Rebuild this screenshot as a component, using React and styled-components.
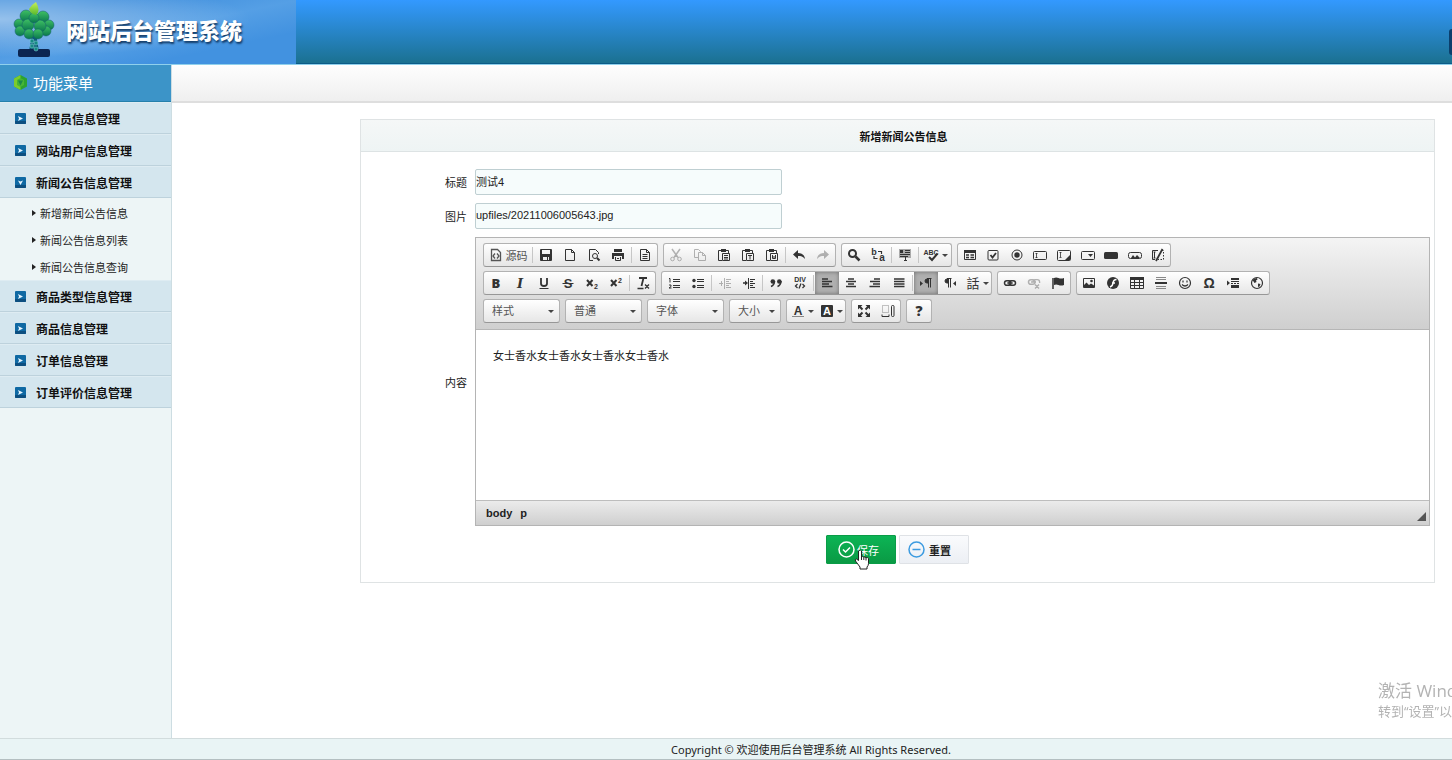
import React, { useState } from 'react'
import styled, { createGlobalStyle, css } from 'styled-components'

const GlobalStyle = createGlobalStyle`
  * {
    box-sizing: border-box;
  }
  body {
    margin: 0;
    background: white;
    color: #222;
    font-family: "Liberation Sans", "Noto Sans CJK SC", sans-serif;
    font-size: 11px;
  }
  button, input, select, textarea {
    font: inherit;
    color: inherit;
  }
`

const Page = styled.div`
  min-height: 100vh;
  display: flex;
  flex-direction: column;
`

const Banner = styled.header`
  height: 65px;
  display: flex;
  justify-content: space-between;
  background: linear-gradient(#3399ff, #2b8bd8 35%, #1b7191 98%);
  border-bottom: 1px solid #8fd0ec;
  box-shadow: inset 0 -1px 0 #0c5c88;
`

const Brand = styled.div`
  width: 296px;
  display: flex;
  align-items: center;
  gap: 10px;
  padding: 0 0 6px 12px;
  background: radial-gradient(
      ellipse at 0 30%,
      rgba(255, 255, 255, 0.45),
      rgba(255, 255, 255, 0) 60%
    ),
    linear-gradient(168deg, #3f8edc 20%, #559fe5 50%, #4292e0 75%);
`

const BrandName = styled.h1`
  margin: 0;
  color: white;
  font-family: "Noto Sans CJK SC", sans-serif;
  font-size: 22px;
  font-weight: 900;
  line-height: 58px;
  text-shadow: 1px 2px 2px #123a66;
`

const BannerTab = styled.span`
  width: 3px;
  height: 26px;
  margin-top: 29px;
  background: #0b3f6c;
  border-radius: 3px 0 0 3px;
`

const Body = styled.div`
  flex: 1;
  display: flex;
`

const Sidebar = styled.nav`
  width: 172px;
  flex-shrink: 0;
  background: #edf5f6;
  border-right: 1px solid #cddde2;
`

const SidebarTitle = styled.h2`
  height: 37px;
  margin: 0;
  display: flex;
  align-items: center;
  gap: 5px;
  padding: 0 0 2px 13px;
  background: #3c94c8;
  border-bottom: 1px solid #2580ab;
  color: white;
  font-size: 15px;
  font-weight: 400;
`

const MenuButton = styled.button`
  width: 100%;
  height: 32px;
  display: flex;
  align-items: center;
  gap: 10px;
  padding: 0 0 0 15px;
  background: #d4e6ee;
  border: none;
  border-bottom: 1px solid #bdd2dc;
  border-top: 1px solid #deecf2;
  color: #111;
  font-size: 12px;
  font-weight: 700;
  cursor: pointer;
`

const SubMenu = styled.ul`
  margin: 0;
  padding: 1px 0 0;
  list-style: none;
`

const SubLink = styled.a`
  height: 27px;
  display: flex;
  align-items: center;
  gap: 4px;
  padding-left: 32px;
  color: #222;
  text-decoration: none;

  &::before {
    content: "";
    border-left: 4px solid #222;
    border-top: 3px solid transparent;
    border-bottom: 3px solid transparent;
  }
`

const Main = styled.main`
  flex: 1;
  min-width: 0;
`

const TopStrip = styled.div`
  height: 38px;
  background: linear-gradient(#fefefe, #efefef);
  border-bottom: 2px solid #dedede;
`

const Card = styled.form`
  margin: 16px 17px 0 188px;
  border: 1px solid #dfe3e4;
`

const CardTitle = styled.h3`
  height: 32px;
  margin: 0;
  padding-left: 12px;
  background: linear-gradient(#f5f7f7, #eef4f4);
  border-bottom: 1px solid #dde3e4;
  color: #111;
  font-size: 11px;
  line-height: 34px;
  text-align: center;
`

const Fields = styled.div`
  display: grid;
  grid-template-columns: 106px 1fr;
  align-items: center;
  gap: 8px;
  padding: 17px 4px 0 0;
`

const Label = styled.label`
  text-align: right;
`

const TextInput = styled.input`
  width: 307px;
  height: 26px;
  padding: 0 0 2px;
  background: #f6fcfc;
  border: 1px solid #bfcfd2;
  border-radius: 2px;
`

const Editor = styled.div`
  min-width: 0;
  border: 1px solid #b4b4b4;
`

const Toolbar = styled.div`
  display: flex;
  flex-direction: column;
  gap: 4px;
  padding: 5px 7px 6px;
  background: linear-gradient(#f4f4f4, #cfcfcf);
  border-bottom: 1px solid #b6b6b6;
`

const ToolRow = styled.div`
  display: flex;
  gap: 5px;
`

const groupBox = css`
  height: 24px;
  background: linear-gradient(#ffffff, #e6e6e6);
  border: 1px solid #b2b2b2;
  border-bottom-color: #979797;
  border-radius: 3px;
`

const ToolGroup = styled.div`
  ${groupBox}
  width: ${p => (p.$width ? `${p.$width}px` : 'auto')};
  display: flex;
  align-items: center;
`

const ToolButton = styled.button`
  width: ${p => p.$width || 24}px;
  height: 22px;
  display: flex;
  align-items: center;
  justify-content: center;
  gap: 2px;
  padding: 0;
  border: none;
  background: ${p => (p.$active ? '#b0b0b0' : 'none')};
  box-shadow: ${p => (p.$active ? 'inset 0 0 4px #6f6f6f' : 'none')};
  color: ${p => (p.$source ? '#555' : '#333')};
  opacity: ${p => (p.disabled ? 0.35 : 1)};
  white-space: nowrap;
  cursor: default;

  svg {
    flex-shrink: 0;
    overflow: visible;
  }
`

const Separator = styled.span`
  width: 1px;
  height: 16px;
  margin: 0 1px;
  background: #c6c6c6;
`

const Caret = styled.span`
  border-top: 3px solid #444;
  border-left: 3px solid transparent;
  border-right: 3px solid transparent;
`

const Combo = styled.span`
  ${groupBox}
  position: relative;
  width: ${p => p.$width}px;

  &::after {
    content: "";
    position: absolute;
    right: 5px;
    top: 10px;
    border-top: 3px solid #444;
    border-left: 3px solid transparent;
    border-right: 3px solid transparent;
    pointer-events: none;
  }
`

const ComboSelect = styled.select`
  appearance: none;
  width: 100%;
  height: 22px;
  padding: 0 12px 0 8px;
  background: none;
  border: none;
  color: #555;
`

const EditArea = styled.textarea`
  display: block;
  width: 100%;
  height: 170px;
  padding: 17px;
  border: none;
  outline: none;
  resize: none;
  line-height: 18px;
`

const StatusBar = styled.div`
  height: 25px;
  display: flex;
  align-items: center;
  gap: 8px;
  padding: 0 3px 0 10px;
  background: linear-gradient(#ebebeb, #cfcfcf);
  border-top: 1px solid #bdbdbd;
  color: #222;
  font-weight: 700;
`

const ResizeGrip = styled.span`
  margin: 6px 0 0 auto;
  border-left: 9px solid transparent;
  border-bottom: 9px solid #555;
`

const Actions = styled.div`
  display: flex;
  justify-content: center;
  gap: 3px;
  padding: 9px 0 18px;
`

const ActionButton = styled.button`
  position: relative;
  width: 70px;
  height: 29px;
  display: flex;
  align-items: center;
  gap: ${p => (p.$primary ? 2 : 4)}px;
  padding: 0 0 0 ${p => (p.$primary ? 11 : 8)}px;
  background: ${p =>
    p.$primary
      ? 'linear-gradient(#0cb455, #0a9a44)'
      : 'linear-gradient(#fafbfd, #eceff4)'};
  border: 1px solid ${p => (p.$primary ? '#0a9c47' : '#dfe2e6')};
  border-radius: 1px;
  color: ${p => (p.$primary ? 'white' : '#222')};
  font-weight: ${p => (p.$primary ? 400 : 700)};
  cursor: pointer;
`

const Pointer = styled.svg`
  position: absolute;
  left: 27px;
  top: 13px;
`

const Footer = styled.footer`
  height: 22px;
  padding-left: 170px;
  background: #e9f4f5;
  border-top: 1px solid #d2dcdd;
  border-bottom: 1px solid #b4bfc1;
  font-family: "Noto Sans", "Noto Sans CJK SC", sans-serif;
  line-height: 21px;
  text-align: center;
`

const Watermark = styled.div`
  position: fixed;
  right: 0;
  bottom: 40px;
  width: 74px;
  overflow: hidden;
  white-space: nowrap;
  color: #b3b3b3;
  font-family: "Open Sans", "Noto Sans CJK SC", sans-serif;
  font-size: 13px;
  line-height: 18px;

  strong {
    display: block;
    font-size: 17px;
    font-weight: 400;
    line-height: 22px;
  }
`

const doc = <path d="M3.500 2.500h6l3 3v8h-9zM9.500 2.500v3h3" />
const clipboard = (
  <>
    <path d="M6 13.500H2.500v-10H12.500V6" />
    <path d="M5 2h5v3H5z" fill="currentColor" stroke="none" />
    <path d="M6.500 6.500h7v7h-7z" />
  </>
)
const glyph = {
  fill: 'currentColor',
  stroke: 'none',
  textAnchor: 'middle',
  fontFamily: 'Liberation Sans',
  fontWeight: 700
}

const icons = {
  source: (
    <>
      <path d="M3.500 13.500v-11h6l3 3v8z" strokeWidth="1.300" />
      <path d="M7 6.500L5 9l2 2.500M9 6.500L11 9l-2 2.500" strokeWidth="1.300" />
    </>
  ),
  save: (
    <>
      <path
        d="M2 3q0-1 1-1h10q1 0 1 1v10q0 1-1 1H3q-1 0-1-1zM4 3v4h8V3zM5 10v3h6v-3z"
        fill="currentColor"
        fillRule="evenodd"
        stroke="none"
      />
      <path d="M9.500 10v3" />
    </>
  ),
  page: doc,
  preview: (
    <>
      <path d="M12.500 7V5.500l-3-3h-6v11H7" />
      <circle cx="9" cy="9" r="2.500" />
      <path d="M11 11l2.500 2.500" strokeWidth="2" />
    </>
  ),
  print: (
    <>
      <path d="M4 2h8v3H4zM2 6h12v6h-2V9H4v3H2z" fill="currentColor" stroke="none" />
      <path d="M5.500 10v3.500h5V10M7 11.500h2" />
    </>
  ),
  template: (
    <>
      {doc}
      <path d="M5.500 7.500h5M5.500 9.500h5M5.500 11.500h5" />
    </>
  ),
  cut: (
    <>
      <path d="M4 2l6 8.500M12 2L6 10.500" strokeWidth="1.500" />
      <circle cx="4.500" cy="12" r="1.800" />
      <circle cx="11.500" cy="12" r="1.800" />
    </>
  ),
  copy: (
    <>
      <path d="M6 10.500H2.500v-8h4l2 2V6" />
      <path d="M6.500 5.500h4l3 3v5h-7zM10.500 5.500v3h3" />
    </>
  ),
  paste: (
    <>
      {clipboard}
      <path d="M8 8.500h4M8 10.500h4M8 12h4" />
    </>
  ),
  pasteText: (
    <>
      {clipboard}
      <path d="M8 8.500h4M10 8.500v4" />
    </>
  ),
  pasteWord: (
    <>
      {clipboard}
      <path d="M8.500 8v3.500h3V8M10 9v3" />
    </>
  ),
  undo: (
    <path
      d="M2 7.500L7 3v3c4 0 6.500 2 7 6-2-2.500-4-3-7-3v3z"
      fill="currentColor"
      stroke="none"
    />
  ),
  redo: (
    <path
      d="M14 7.500L9 3v3c-4 0-6.500 2-7 6 2-2.500 4-3 7-3v3z"
      fill="currentColor"
      stroke="none"
    />
  ),
  find: (
    <>
      <circle cx="6.500" cy="6.500" r="3.500" strokeWidth="2" />
      <path d="M9.500 9.500l4 4" strokeWidth="2.500" />
    </>
  ),
  replace: (
    <>
      <text x="4" y="8" fontSize="9" {...glyph}>b</text>
      <text x="12" y="14" fontSize="10" {...glyph}>a</text>
      <path d="M8 4.500h3.500V7M7.500 11.500H4V9" strokeWidth="1.200" />
    </>
  ),
  selectAll: (
    <>
      <path d="M2 2h12v9H2z" fill="#aaa" stroke="none" />
      <path d="M8 3.500h5M8 5.500h5M3 7.500h10M3 9.500h8M8.500 10v4M7 13.500h3" />
      <path d="M3 3h3v3H3z" fill="currentColor" stroke="none" />
    </>
  ),
  spell: (
    <>
      <text x="7" y="7.500" fontSize="7" {...glyph}>ABC</text>
      <path d="M5 10l3 3 5.500-6.500" strokeWidth="2" />
    </>
  ),
  form: (
    <>
      <path d="M2.500 4h11v8.500h-11z" />
      <path d="M2 3h12v3H2z" fill="currentColor" stroke="none" />
      <path d="M4 8h3M4 10.500h3M8.500 8H12M8.500 10.500H12" strokeWidth="1.500" />
    </>
  ),
  checkbox: (
    <>
      <rect x="3" y="3.500" width="10" height="9.500" rx="1" />
      <path d="M5.500 8l2 2.500 3.500-4.500" strokeWidth="1.800" />
    </>
  ),
  radio: (
    <>
      <circle cx="8" cy="8" r="5" />
      <circle cx="8" cy="8" r="2.700" fill="currentColor" stroke="none" />
    </>
  ),
  textField: (
    <>
      <rect x="1.500" y="4.500" width="13" height="8" rx="1" />
      <path d="M4.500 6v5M3.500 6.500h2M3.500 10.500h2" strokeWidth=".8" />
    </>
  ),
  textarea: (
    <>
      <rect x="1.500" y="3.500" width="13" height="10" rx="1" />
      <path d="M4.500 5v5M3.500 5.500h2M3.500 10.500h2" strokeWidth=".8" />
      <path d="M14 8v5H9z" fill="currentColor" stroke="none" />
    </>
  ),
  selectField: (
    <>
      <rect x="1.500" y="4.500" width="13" height="8" rx="1" />
      <path d="M8 7h5l-2.500 3z" fill="currentColor" stroke="none" />
    </>
  ),
  buttonField: (
    <rect x="1" y="5" width="14" height="7" rx="1.500" fill="currentColor" stroke="none" />
  ),
  imageButton: (
    <>
      <rect x="1.500" y="5.500" width="13" height="6" rx="2" />
      <path d="M4 11l2-3 2 2.500L10 8l3 3z" fill="currentColor" stroke="none" />
    </>
  ),
  hidden: (
    <>
      <path d="M8 3.500H2.500v9H5M4.500 5v6M3.500 5h2M3.500 11h2" />
      <path d="M12 3.500h1.500v9H8" strokeDasharray="1.500 1.500" />
      <path d="M12.500 2L6 14" strokeWidth="1.800" />
    </>
  ),
  bold: <text x="8" y="12.500" fontSize="13" {...glyph} fontFamily="Open Sans" fontWeight="800">B</text>,
  italic: (
    <text x="8" y="12.500" fontSize="13" {...glyph} fontFamily="DejaVu Serif" fontStyle="italic">
      I
    </text>
  ),
  underline: (
    <>
      <path d="M5 3v5.500q0 2.500 3 2.500t3-2.500V3" strokeWidth="1.800" />
      <path d="M3.500 13.500h9" />
    </>
  ),
  strike: (
    <>
      <text x="8" y="12.500" fontSize="13" {...glyph}>S</text>
      <path d="M2.500 8.500h11" />
    </>
  ),
  subscript: (
    <>
      <path d="M3 5l5.500 6M8.500 5L3 11" strokeWidth="2" />
      <text x="12" y="14" fontSize="7" {...glyph}>2</text>
    </>
  ),
  superscript: (
    <>
      <path d="M3 5l5.500 6M8.500 5L3 11" strokeWidth="2" />
      <text x="12" y="8" fontSize="7" {...glyph}>2</text>
    </>
  ),
  removeFormat: (
    <>
      <path d="M4 3h8M8.500 3l-2 8" strokeWidth="1.800" />
      <path d="M2.500 13.500h6M10 9.500l4 4M14 9.500l-4 4" strokeWidth="1.300" />
    </>
  ),
  numbered: (
    <>
      <path d="M7 4.500h7M7 6.500h7M7 10.500h7M7 12.500h7" />
      <path d="M3 3.500h1v4M3 10h2v1.500L3 13h2.500" />
    </>
  ),
  bulleted: (
    <>
      <path d="M7 4.500h7M7 6.500h7M7 10.500h7M7 12.500h7" />
      <circle cx="4" cy="5.500" r="1.700" fill="currentColor" stroke="none" />
      <circle cx="4" cy="11.500" r="1.700" fill="currentColor" stroke="none" />
    </>
  ),
  outdent: (
    <>
      <path d="M7.500 3v11M9 4.500h5M9 6.500h3M9 8.500h5M9 10.500h3M9 12.500h5" />
      <path d="M2 8.500h4M4.500 6v5" />
    </>
  ),
  indent: (
    <>
      <path d="M7.500 3v11M9 4.500h5M9 6.500h3M9 8.500h5M9 10.500h3M9 12.500h5" />
      <path d="M2 8h4" strokeWidth="1.500" />
      <path d="M4 5.500L7 8l-3 2.500z" fill="currentColor" stroke="none" />
    </>
  ),
  quote: (
    <>
      <circle cx="4.800" cy="6.500" r="2.300" fill="currentColor" stroke="none" />
      <circle cx="11.300" cy="6.500" r="2.300" fill="currentColor" stroke="none" />
      <path d="M6.500 6q0 4-3.500 5.500M13 6q0 4-3.500 5.500" strokeWidth="1.500" />
    </>
  ),
  div: (
    <>
      <text x="8" y="7" fontSize="7" {...glyph}>DIV</text>
      <path d="M5.500 9L3.500 11l2 2M10.500 9l2 2-2 2M9 8.500l-2 5" strokeWidth="1.300" />
    </>
  ),
  left: <path d="M3 4h6M3 6.500h10M3 9h7M3 11.500h10.500" strokeWidth="1.700" />,
  center: <path d="M5 4h6M3 6.500h10M5 9h6M3 11.500h10" strokeWidth="1.700" />,
  right: <path d="M7 4h6M3 6.500h10M6 9h7M2.500 11.500H13" strokeWidth="1.700" />,
  justify: <path d="M3 4h10.500M3 6.500h10.500M3 9h10.500M3 11.500h10.500" strokeWidth="1.700" />,
  ltr: (
    <>
      <path d="M2 6l3 2.500L2 11z" fill="currentColor" stroke="none" />
      <path d="M10 4H9a2 2 0 000 4h1z" fill="currentColor" />
      <path d="M10.500 3.500v9M12.500 3.500v9M9 3.500h4.500" />
    </>
  ),
  rtl: (
    <>
      <path d="M14 6l-3 2.500 3 2.500z" fill="currentColor" stroke="none" />
      <path d="M6 4H5a2 2 0 000 4h1z" fill="currentColor" />
      <path d="M6.500 3.500v9M8.500 3.500v9M5 3.500h4.500" />
    </>
  ),
  language: (
    <text x="8" y="13" fontSize="13" {...glyph} fontFamily="Noto Sans CJK TC" fontWeight="400">
      話
    </text>
  ),
  link: (
    <>
      <rect x="2.500" y="5.700" width="6.500" height="4.600" rx="2.300" strokeWidth="1.500" />
      <rect x="7" y="5.700" width="6.500" height="4.600" rx="2.300" strokeWidth="1.500" />
      <path d="M5 8h6" />
    </>
  ),
  unlink: (
    <>
      <rect x="2.500" y="4.700" width="6.500" height="4.600" rx="2.300" strokeWidth="1.500" />
      <path
        d="M7 7q0-2.300 2.300-2.300h2q2.300 0 2.300 2.300v1M5 7h5M9 9.500l4 4M13 9.500l-4 4"
        strokeWidth="1.300"
      />
    </>
  ),
  flag: (
    <>
      <path d="M3 3v11" strokeWidth="1.500" />
      <path d="M4 3q2-1 4.500 0T14 3v7q-3 1-5.500 0T4 10z" fill="currentColor" stroke="none" />
    </>
  ),
  image: (
    <>
      <path d="M2.500 3.500h11v9h-11z" />
      <path d="M3 12v-2l2.500-2.500L8 10l2-1.500 3 2V12z" fill="currentColor" stroke="none" />
      <circle cx="10.500" cy="6" r="1.300" fill="currentColor" stroke="none" />
    </>
  ),
  flash: (
    <>
      <circle cx="8" cy="8" r="6" fill="currentColor" stroke="none" />
      <path d="M11.500 4.500q-3 0-3.500 3.500t-3 4M7 8h3" stroke="white" strokeWidth="1.500" />
    </>
  ),
  table: (
    <>
      <path d="M1.500 3.500h13v10h-13zM1.500 7.500h13M1.500 10.500h13M5.500 4v9M10.500 4v9" />
      <path d="M1 2h14v3H1z" fill="currentColor" stroke="none" />
    </>
  ),
  rule: (
    <>
      <path d="M3 2.500h10M3 4.500h10M3 11.500h10M3 13.500h10" stroke="#888" />
      <path d="M2 8h12" strokeWidth="2" />
    </>
  ),
  smiley: (
    <>
      <circle cx="8" cy="8" r="5.500" strokeWidth="1.200" />
      <path d="M6 5.500v2M10 5.500v2M5 9.500q3 3 6 0" strokeWidth="1.200" />
    </>
  ),
  omega: <text x="8" y="13" fontSize="14" {...glyph}>Ω</text>,
  pageBreak: (
    <>
      <path d="M6 4h8M6 12h8" strokeWidth="2" />
      <path d="M6 6.500h8M6 10.500h8" />
      <path d="M6 8.500h8" strokeDasharray="2 1" />
      <path d="M2 5.500l3 2.500-3 2.500z" fill="currentColor" stroke="none" />
    </>
  ),
  globe: (
    <>
      <circle cx="8" cy="8" r="5.500" strokeWidth="1.200" />
      <path
        d="M3.500 5q2-2 4.500-2l.5 1.500-1.500 1 .5 1.500-2 1zM9 8.500l2.500.5-1 2.500-1.500.5z"
        fill="currentColor"
        stroke="none"
      />
    </>
  ),
  textColor: (
    <>
      <text x="8" y="11.500" fontSize="12" {...glyph}>A</text>
      <path d="M2 13.500h12" stroke="#888" />
    </>
  ),
  bgColor: (
    <>
      <rect x="2" y="2" width="12" height="12" rx="1" fill="currentColor" stroke="none" />
      <text x="8" y="12" fontSize="11" {...glyph} fill="white">A</text>
    </>
  ),
  maximize: (
    <>
      <path
        d="M2 2h4.500L2 6.500zM14 2H9.500L14 6.500zM2 14h4.500L2 9.500zM14 14H9.500L14 9.500z"
        fill="currentColor"
        stroke="none"
      />
      <path
        d="M3 3l3.500 3.500M13 3L9.500 6.500M3 13l3.500-3.500M13 13L9.500 9.500"
        strokeWidth="2"
      />
    </>
  ),
  blocks: (
    <>
      <path d="M2.500 2.500h6v7h-6z" strokeDasharray="1 1" stroke="#888" />
      <rect x="11.500" y="2.500" width="2.500" height="11" rx="1" />
      <path d="M2 11.500v2h7v-2" />
    </>
  ),
  help: <text x="8" y="13" fontSize="14" {...glyph} fontFamily="Open Sans" fontWeight="800">?</text>
}

const Icon = ({ name }) => (
  <svg width="16" height="16" viewBox="0 0 16 16" fill="none" stroke="currentColor" aria-hidden="true">
    {icons[name]}
  </svg>
)

// '|' draws a separator between two buttons
const toolRows = [
  [
    { items: ['source', '|', 'save', 'page', 'preview', 'print', '|', 'template'] },
    { items: ['cut', 'copy', 'paste', 'pasteText', 'pasteWord', '|', 'undo', 'redo'] },
    { items: ['find', 'replace', '|', 'selectAll', '|', 'spell'] },
    {
      width: 214,
      items: [
        'form',
        'checkbox',
        'radio',
        'textField',
        'textarea',
        'selectField',
        'buttonField',
        'imageButton',
        'hidden'
      ]
    }
  ],
  [
    {
      items: ['bold', 'italic', 'underline', 'strike', 'subscript', 'superscript', '|', 'removeFormat']
    },
    {
      items: [
        'numbered',
        'bulleted',
        '|',
        'outdent',
        'indent',
        '|',
        'quote',
        'div',
        '|',
        'left',
        'center',
        'right',
        'justify',
        '|',
        'ltr',
        'rtl',
        'language'
      ]
    },
    { items: ['link', 'unlink', 'flag'] },
    { items: ['image', 'flash', 'table', 'rule', 'smiley', 'omega', 'pageBreak', 'globe'] }
  ]
]

const lastGroups = [
  { items: ['textColor', 'bgColor'] },
  { items: ['maximize', 'blocks'] },
  { items: ['help'] }
]

const combos = [
  { name: '样式', width: 77 },
  { name: '普通', width: 77 },
  { name: '字体', width: 77 },
  { name: '大小', width: 52 }
]

const widths = { source: 47, spell: 31, language: 29, textColor: 29, bgColor: 29 }
const disabled = ['cut', 'copy', 'redo', 'outdent', 'unlink']
const active = ['left', 'ltr']

const Group = ({ group }) => (
  <ToolGroup $width={group.width}>
    {group.items.map((name, i) =>
      name === '|' ? (
        <Separator key={i} />
      ) : (
        <ToolButton
          key={name}
          type="button"
          aria-label={name}
          disabled={disabled.includes(name)}
          $active={active.includes(name)}
          $source={name === 'source'}
          $width={widths[name]}
        >
          <Icon name={name} />
          {name === 'source' && '源码'}
          {widths[name] && name !== 'source' && <Caret />}
        </ToolButton>
      )
    )}
  </ToolGroup>
)

const TreeLogo = () => (
  <svg width="44" height="58" viewBox="0 0 44 58" aria-hidden="true">
    <defs>
      <linearGradient id="leaf" x1="0" y1="0" x2="0" y2="1">
        <stop offset="0" stopColor="#3fc063" />
        <stop offset="1" stopColor="#08764e" />
      </linearGradient>
      <linearGradient id="bud" x1="0" y1="0" x2="0" y2="1">
        <stop offset="0" stopColor="#c7f05a" />
        <stop offset="1" stopColor="#57b92c" />
      </linearGradient>
    </defs>
    <path d="M18 34l1 6-2 11h10l-2-11 1-6z" fill="#0d5f78" />
    <path d="M6 51q0-2 2-2h28q2 0 2 2v4q0 2-2 2H8q-2 0-2-2z" fill="#0b2551" />
    <g fill="url(#leaf)" stroke="#155f6c" strokeWidth=".5">
      <circle cx="14" cy="16" r="6" />
      <circle cx="31" cy="17" r="6" />
      <circle cx="7" cy="24" r="5" />
      <circle cx="37" cy="25" r="5" />
      <circle cx="8" cy="31" r="5" />
      <circle cx="34" cy="31" r="5" />
      <circle cx="16" cy="25" r="6" />
      <circle cx="28" cy="26" r="6" />
      <circle cx="22" cy="18" r="5" />
      <circle cx="17" cy="34" r="5" />
      <circle cx="26" cy="34" r="5" />
    </g>
    <g fill="#168b83" stroke="#7cc9d2" strokeWidth=".6">
      <circle cx="20" cy="41" r="2" />
      <circle cx="24" cy="43" r="2" />
      <circle cx="20" cy="46" r="2" />
      <circle cx="24" cy="49" r="2" />
    </g>
    <path d="M24 2q5 9 0 13-6-1-7-6 2-4 7-7z" fill="url(#bud)" />
  </svg>
)

const Hexagon = () => (
  <svg width="15" height="17" viewBox="0 0 15 17" aria-hidden="true">
    <path d="M7.500 1L14 4.500v8L7.500 16 1 12.500v-8z" fill="#2da32f" />
    <path d="M7.500 1L1 4.500v8L7.500 16z" fill="#7ccc2c" />
    <path d="M7.500 4L11 6v5l-3.500 2L4 11V6z" fill="#46b535" />
    <path d="M5 6.500h5L7.500 11.500z" fill="#1b8a4a" />
  </svg>
)

const MenuArrow = ({ open }) => (
  <svg width="11" height="11" viewBox="0 0 11 11" aria-hidden="true">
    <rect width="11" height="11" rx="1" fill="#0f69a3" />
    <path d="M0 8h11v2q0 1-1 1H1q-1 0-1-1z" fill="#0c4f80" />
    <path d={open ? 'M3 3.500l2.500 1 2.500-1L5.500 8z' : 'M3 3l5 2.500L3 8l1-2.500z'} fill="#e6f5ff" />
  </svg>
)

const menu = [
  { name: '管理员信息管理' },
  { name: '网站用户信息管理' },
  {
    name: '新闻公告信息管理',
    children: ['新增新闻公告信息', '新闻公告信息列表', '新闻公告信息查询']
  },
  { name: '商品类型信息管理' },
  { name: '商品信息管理' },
  { name: '订单信息管理' },
  { name: '订单评价信息管理' }
]

const Menu = () => {
  const [open, setOpen] = useState('新闻公告信息管理')
  return (
    <Sidebar>
      <SidebarTitle>
        <Hexagon />
        功能菜单
      </SidebarTitle>
      {menu.map(item => (
        <div key={item.name}>
          <MenuButton
            type="button"
            aria-expanded={open === item.name}
            onClick={() => setOpen(item.name)}
          >
            <MenuArrow open={open === item.name} />
            {item.name}
          </MenuButton>
          {open === item.name && item.children && (
            <SubMenu>
              {item.children.map(child => (
                <li key={child}>
                  <SubLink href="#">{child}</SubLink>
                </li>
              ))}
            </SubMenu>
          )}
        </div>
      ))}
    </Sidebar>
  )
}

const RichEditor = () => (
  <Editor>
    <Toolbar>
      {toolRows.map((row, i) => (
        <ToolRow key={i}>
          {row.map((group, j) => (
            <Group key={j} group={group} />
          ))}
        </ToolRow>
      ))}
      <ToolRow>
        {combos.map(combo => (
          <Combo key={combo.name} $width={combo.width}>
            <ComboSelect aria-label={combo.name}>
              <option>{combo.name}</option>
            </ComboSelect>
          </Combo>
        ))}
        {lastGroups.map((group, i) => (
          <Group key={i} group={group} />
        ))}
      </ToolRow>
    </Toolbar>
    <EditArea id="content" defaultValue="女士香水女士香水女士香水女士香水" />
    <StatusBar>
      <span>body</span>
      <span>p</span>
      <ResizeGrip />
    </StatusBar>
  </Editor>
)

const App = () => (
  <Page>
    <GlobalStyle />
    <Banner>
      <Brand>
        <TreeLogo />
        <BrandName>网站后台管理系统</BrandName>
      </Brand>
      <BannerTab />
    </Banner>
    <Body>
      <Menu />
      <Main>
        <TopStrip />
        <Card onSubmit={e => e.preventDefault()}>
          <CardTitle>新增新闻公告信息</CardTitle>
          <Fields>
            <Label htmlFor="title">标题</Label>
            <TextInput id="title" type="text" defaultValue="测试4" />
            <Label htmlFor="picture">图片</Label>
            <TextInput id="picture" type="text" defaultValue="upfiles/20211006005643.jpg" />
            <Label htmlFor="content">内容</Label>
            <RichEditor />
          </Fields>
          <Actions>
            <ActionButton type="submit" $primary>
              <svg width="17" height="17" viewBox="0 0 17 17" fill="none" stroke="white" aria-hidden="true">
                <circle cx="8.500" cy="8.500" r="7.500" strokeWidth="1.500" />
                <path d="M5 8.500l2.500 2.500L12 6.500" strokeWidth="1.500" />
              </svg>
              保存
              <Pointer width="16" height="21" viewBox="0 0 16 21" aria-hidden="true">
                <path
                  d="M5 1.500q1.500-1 2.500.5v6q1-1 2.300.3 1.200-.9 2.200.4 1.500-.7 2.500.8v5q0 2-1.500 3.500v2H6v-2l-4.500-6q-.8-2 1-2l2 1.500V2z"
                  fill="white"
                  stroke="#222"
                />
                <path d="M7.500 8v3M9.800 8.500v2.500M12 9v2.500" stroke="#222" />
              </Pointer>
            </ActionButton>
            <ActionButton type="reset">
              <svg width="17" height="17" viewBox="0 0 17 17" fill="none" stroke="#3d9be0" aria-hidden="true">
                <circle cx="8.500" cy="8.500" r="7.500" strokeWidth="1.500" />
                <path d="M4.500 8.500h8" strokeWidth="1.500" />
              </svg>
              重置
            </ActionButton>
          </Actions>
        </Card>
      </Main>
    </Body>
    <Footer>Copyright © 欢迎使用后台管理系统 All Rights Reserved.</Footer>
    <Watermark>
      <strong>激活 Windows</strong>
      转到“设置”以激活 Windows。
    </Watermark>
  </Page>
)

export default App
